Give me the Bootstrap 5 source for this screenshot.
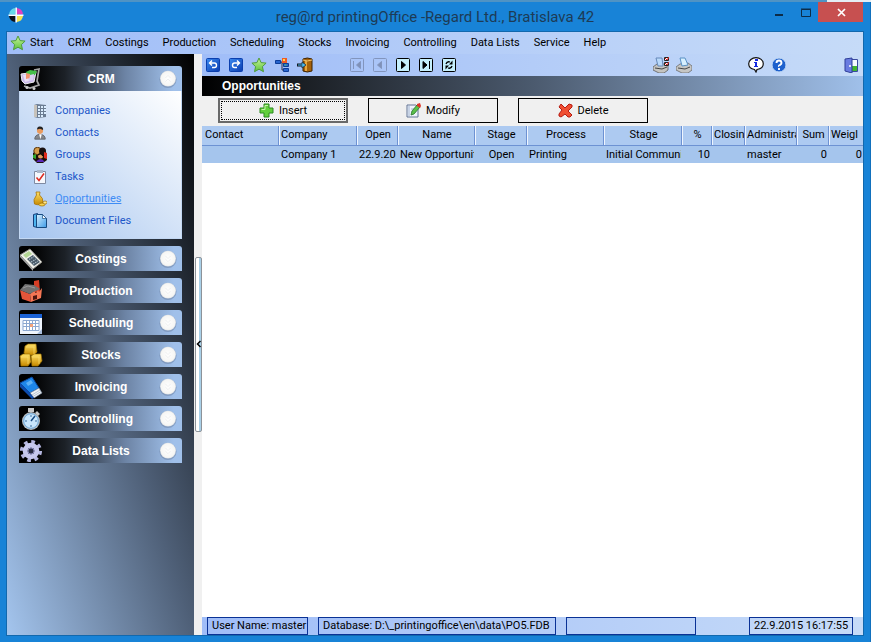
<!DOCTYPE html>
<html lang="en">
<head>
<meta charset="utf-8">
<meta name="viewport" content="width=device-width, initial-scale=1">
<title>reg@rd printingOffice</title>
<link href="https://cdn.jsdelivr.net/npm/bootstrap@5.3.0/dist/css/bootstrap.min.css" rel="stylesheet">
<style>
body{font-family:Roboto,"Liberation Sans",Arial,sans-serif;font-size:11px;line-height:16px;color:#000;background:#fff}
svg{display:block;flex:none}
button{font:inherit;color:inherit}
.app-window{min-height:100vh;margin-right:1px;background:#1883d7;padding:0 7px 7px;border-right:1px solid #1170bd}
.top-strip{height:2px;margin:0 -8px 0 -7px;background:linear-gradient(90deg,#4f93c4 95%,#e4eef5 95%)}
.title-bar{height:30px}
.title-text{font-family:Roboto,"Open Sans",sans-serif;font-size:15px;line-height:30px;color:#1d3b56;padding-right:18px}
.win-btn{width:27px;height:20px;border:0;background:none;padding:0}
.win-close{width:45px;background:#c75050}
.client{outline:1px solid #1268ad}
.blue-bar{background:linear-gradient(90deg,#a0bdf8,#c6dbf8)}
.menu-bar{height:22px;padding-left:3px}
.menu-bar a{color:#000;text-decoration:none;padding:0 7px;line-height:22px}
.menu-bar a.start-link{padding-left:0}
.side-bar{flex:0 0 187px;padding:12px 12px 20px;background:linear-gradient(to bottom left,#000,#4f6078 50%,#a4c5ee)}
.group-head{height:25px;width:100%;border:0;padding:0 5px 0 0;background:linear-gradient(90deg,#000 8%,#1c2127 28%,#6c83a4 65%,#a0c0ea 95%);border-radius:3px 3px 0 0;color:#fff;font-family:"Liberation Sans",Arial,sans-serif;font-weight:700;font-size:12px}
.group-list{padding:9px 13px 6px;background:linear-gradient(to top right,#a4c4ef,#fff);border:1px solid #c3d8f3;border-top:0}
.group-list a{height:22px;color:#1c56c8;text-decoration:none}
.group-list a.current{color:#3f8cf5;text-decoration:underline}
.group-stack{gap:7px;padding-top:7px}
.splitter{flex:0 0 8px;background:#f0f0f0}
.grip{width:7px;height:30%;border:1px solid #8c9299;border-radius:2px;background:linear-gradient(90deg,#fff 55%,#a9d0e8 55%)}
.tool-bar{height:22px;padding:0 4px 0 3px}
.tool-bar button{border:0;padding:0;background:none;width:16px;height:16px}
.tool-group{gap:7px}
.spread{gap:56px}
.nav-gap{margin-left:36px}
.page-head{height:20px;padding-left:20px;line-height:20px;font-family:"Liberation Sans",Arial,sans-serif;font-size:12px;font-weight:700;color:#fff;background:linear-gradient(90deg,#000,#16191d 12%,#4b5a6e 50%,#a0c0ea)}
.actions{background:#f0f0f0;gap:20px;padding:2px 16px 3px}
.act{width:130px;height:25px;border:1px solid #000;background:#f0f0f0;gap:5px;padding:0}
.act.focused{border:2px solid #696969;outline:1px dotted #000;outline-offset:-4px}
.data-grid{table-layout:fixed;width:100%}
.data-grid th,.data-grid td{overflow:hidden;white-space:nowrap;padding:0 0 0 3px;font-weight:400}
.data-grid th{background:#adcaf1;border-bottom:1px solid #6d92d3;text-align:center;height:19px;line-height:18px}
.data-grid th+th{background:linear-gradient(90deg,#6d92d3 1px,#eef5ff 1px,#eef5ff 2px,#adcaf1 2px)}
.data-grid td{background:#a5c5ed;height:17px;line-height:17px}
.data-grid th.lead-col{text-align:left}
.data-grid td.text-end{padding-right:1px}
.work{background:#fff}
.status-bar{height:18px;padding:0 10px 0 5px;gap:10px}
.status-box{border:1px solid #0a3296;height:18px;line-height:16px;padding:0 4px;white-space:nowrap}
.w-user{width:101px}.w-db{width:238px}.w-empty{width:130px}.w-time{width:104px}
</style>
<script src="https://cdn.jsdelivr.net/npm/bootstrap@5.3.0/dist/js/bootstrap.bundle.min.js"></script>
</head>
<body>
<svg width="0" height="0" class="position-absolute" aria-hidden="true">
<defs>
<linearGradient id="gBlue" x2="1" y2="1"><stop stop-color="#3b8af0"/><stop offset="1" stop-color="#0a3cb0"/></linearGradient>
<linearGradient id="gGold" x2="0" y2="1"><stop stop-color="#ffe066"/><stop offset="1" stop-color="#c78a00"/></linearGradient>
<linearGradient id="gGreen" x2="0" y2="1"><stop stop-color="#c9f59c"/><stop offset="1" stop-color="#5cc23c"/></linearGradient>
<linearGradient id="gDoc" x2="1" y2="1"><stop stop-color="#d8f0ff"/><stop offset="1" stop-color="#3d9be8"/></linearGradient>
<radialGradient id="gKnob"><stop stop-color="#fff"/><stop offset=".85" stop-color="#f6f6f4"/><stop offset="1" stop-color="#dde0e4"/></radialGradient>
<symbol id="star" viewBox="0 0 16 16"><path d="M8 1l2.1 4.6 5 .5-3.7 3.500 1.100 5.100L8 12.200l-4.500 2.500 1.100-5.100L.9 6.100l5-.5z" fill="url(#gGreen)" stroke="#4f9b3d"/></symbol>
<symbol id="knob" viewBox="0 0 20 20"><circle cx="10" cy="10.500" r="9.500" fill="#64789a" opacity=".45"/><circle cx="10" cy="9.500" r="8.800" fill="url(#gKnob)"/><path d="M7 6.500l3 3 3-3M7 10l3 3 3-3" fill="none" stroke="#ecedee"/></symbol>
<symbol id="knobUp" viewBox="0 0 20 20"><circle cx="10" cy="10.500" r="9.500" fill="#64789a" opacity=".45"/><circle cx="10" cy="9.500" r="8.800" fill="url(#gKnob)"/><path d="M7 9l3-3 3 3M7 13l3-3 3 3" fill="none" stroke="#ecedee"/></symbol>
</defs>
</svg>
<div class="app-window d-flex flex-column">
<div class="top-strip"></div>
<header class="title-bar position-relative d-flex align-items-start">
<svg class="mt-1" width="18" height="18" viewBox="-2 1 18 18" aria-hidden="true"><path d="M6.500 3v6.500H0A7 7 0 016.500 3z" fill="#66d8e8"/><path d="M8 3v6.500h6A7 7 0 008 3z" fill="#e040c0"/><path d="M6.500 11v6A7 7 0 010 11z" fill="#101018"/><path d="M8 11v6a7 7 0 006-6z" fill="#f4e050"/><path d="M7.200 2.500v15M-.5 10.200h15" stroke="#fff" stroke-width="1.500"/></svg>
<div class="title-text flex-grow-1 text-center">reg@rd printingOffice -Regard Ltd., Bratislava 42</div>
<div class="d-flex position-absolute end-0">
<button class="win-btn" aria-label="Minimize"><svg width="27" height="20"><path d="M11 13h8" stroke="#0c2c48" stroke-width="2"/></svg></button>
<button class="win-btn" aria-label="Maximize"><svg width="27" height="20"><path d="M10.500 7.500h9v7h-9zM10 7h10" fill="none" stroke="#0c2c48"/></svg></button>
<button class="win-btn win-close" aria-label="Close"><svg width="45" height="20"><path d="M20 7l7 7M27 7l-7 7" stroke="#fff" stroke-width="1.700"/></svg></button>
</div>
</header>
<div class="client flex-grow-1 d-flex flex-column">
<nav class="menu-bar blue-bar d-flex align-items-center" aria-label="Main menu">
<a href="#" class="start-link d-flex align-items-center gap-1"><svg width="16" height="16"><use href="#star"/></svg>Start</a>
<a href="#">CRM</a><a href="#">Costings</a><a href="#">Production</a><a href="#">Scheduling</a><a href="#">Stocks</a><a href="#">Invoicing</a><a href="#">Controlling</a><a href="#">Data Lists</a><a href="#">Service</a><a href="#">Help</a>
</nav>
<div class="flex-grow-1 d-flex">
<aside class="side-bar d-flex flex-column">
<section>
<button class="group-head d-flex align-items-center"><svg width="24" height="24" viewBox="0 0 24 24"><path d="M15 3l5-1-2 12 2 4-9 3-6-2" fill="none" stroke="#a5a5a5" stroke-width="1.700"/><path d="M2 7l15-2-2 10-9 2-3-3z" fill="#c9b8e8" stroke="#eee"/><path d="M7 5l4-2 7 1-2 4-7 1z" fill="#45c04a"/><path d="M4 8l5-1 1 7-4 1z" fill="#eadff5"/><path d="M7 6l4 1v4l-4 1z" fill="#f2946c"/><path d="M11 8l4-1-1 6-4 1z" fill="#dcd0f2"/><circle cx="8" cy="20.500" r="1.500" fill="#ccc"/><circle cx="15" cy="21.500" r="1.500" fill="#ccc"/></svg><span class="flex-grow-1">CRM</span><svg width="18" height="20"><use href="#knobUp"/></svg></button>
<nav class="group-list d-flex flex-column" aria-label="CRM">
<a href="#" class="d-flex align-items-center gap-2"><svg width="14" height="16" viewBox="0 0 14 16"><path d="M1 2l3-1 9 1v12l-8 1-4-1z" fill="#6b7c92"/><path d="M1 2h3v12H1z" fill="#c6c2bb"/><path d="M5 4h8M5 7h8M5 10h8M5 13h5" stroke="#dceeff" stroke-width="2" stroke-dasharray="2 1"/></svg>Companies</a>
<a href="#" class="d-flex align-items-center gap-2"><svg width="14" height="16" viewBox="0 0 16 16"><path d="M2 15q0-5 6-5.500 6 .5 6 5.500z" fill="#85878c" stroke="#606268"/><path d="M7 9.500h3L8.500 15z" fill="#fff"/><circle cx="8" cy="5.500" r="3.500" fill="#e99a5e"/><path d="M4.500 4Q5 0 8 .5q4 0 3.500 4L8 3z" fill="#222"/></svg>Contacts</a>
<a href="#" class="d-flex align-items-center gap-2"><svg width="14" height="16" viewBox="0 0 14 16"><path d="M0 6l3-2 10 1 1 8-4 3H4l-4-4z" fill="#1c0f08"/><circle cx="4.500" cy="4" r="3.700" fill="#d59c48" stroke="#57340c"/><path d="M0 8l3-1v5l-3-1z" fill="#36a62e"/><circle cx="9.500" cy="4" r="3.500" fill="#181010"/><path d="M11 5l3 1v6l-3-1z" fill="#e02a1c"/><circle cx="7.500" cy="9" r="2.500" fill="#e0a060"/><path d="M5 8q3-3 5 1" fill="none" stroke="#100804" stroke-width="1.500"/><path d="M3 15q2-3 4.500-3t4 3z" fill="#5a28b8"/></svg>Groups</a>
<a href="#" class="d-flex align-items-center gap-2"><svg width="14" height="16" viewBox="0 0 14 16"><path d="M1.500 2.500h11v12h-11z" fill="#f5f8fe" stroke="#7f8aa2"/><path d="M4 1h6v3H4z" fill="#a9b6cb"/><path d="M3.500 8.500l2.500 3 5-7" fill="none" stroke="#dc2a20" stroke-width="1.500"/></svg>Tasks</a>
<a href="#" class="current d-flex align-items-center gap-2"><svg width="14" height="16" viewBox="0 0 14 16"><path d="M3 1h4L6.500 4q4 3 3.500 8-3 3-8.500 1-2-4 2-9z" fill="url(#gGold)" stroke="#a87409" stroke-width=".8"/><ellipse cx="9" cy="13.500" rx="3" ry="1.500" fill="#f8d34c" stroke="#9d6b03" stroke-width=".7"/><ellipse cx="12" cy="11.500" rx="2" ry="1.500" fill="#ffe98a" stroke="#9d6b03" stroke-width=".7"/></svg>Opportunities</a>
<a href="#" class="d-flex align-items-center gap-2"><svg width="14" height="16" viewBox="0 0 14 16"><path d="M.5 1.500l4-1v14l-4-1z" fill="#4db4ee" stroke="#153e7a"/><path d="M3.500 1.500h6l4 4v9h-10z" fill="url(#gDoc)" stroke="#174a80"/><path d="M9.500 1.500v4h4z" fill="#fff" stroke="#174a80" stroke-width=".7"/></svg>Document Files</a>
</nav>
</section>
<div class="group-stack d-flex flex-column">
<button class="group-head d-flex align-items-center"><svg width="24" height="24" viewBox="0 0 24 24"><path d="M1 8l10-6 12 13-9 7z" fill="#f0f0ea" stroke="#8a8a84"/><path d="M1 8v2l13 14v-2z" fill="#aaa"/><path d="M4 8l6-4 3 3-6 4z" fill="#b4d694"/><path d="M8 12l6-4 7 7-6 4z" fill="#4a5a68"/><path d="M10 12.500l5-3M12 15l5-3M14 17l5-3" stroke="#a9bac6" stroke-width="1.200" stroke-dasharray="1.500 1"/></svg><span class="flex-grow-1">Costings</span><svg width="18" height="20"><use href="#knob"/></svg></button>
<button class="group-head d-flex align-items-center"><svg width="24" height="24" viewBox="0 0 24 24"><path d="M15 2l5-1 1 12h-6z" fill="#d63d24"/><path d="M1 11l10 4 1 8-9-3z" fill="#e4553a"/><path d="M11 15l4-3 2 2 2-3 1 2 3-4-1 10-10 4z" fill="#f47654"/><path d="M1 11l5-6 9 1 6 4-4 2-3 1-3 2z" fill="#707070"/><path d="M4 9l5-2 7 2" fill="none" stroke="#999"/><path d="M14 17l4-1v4l-4 1z" fill="#4e1710"/></svg><span class="flex-grow-1">Production</span><svg width="18" height="20"><use href="#knob"/></svg></button>
<button class="group-head d-flex align-items-center"><svg width="24" height="24" viewBox="0 0 24 24"><path d="M1 3h22v20H1z" fill="#eef4fc"/><path d="M1 3h22v4H1z" fill="#1b62d5"/><path d="M4 9.500h16v10H4z" fill="#fff" stroke="#8ba7d0"/><path d="M4 12.500h16M4 15.500h16M7.500 10v9M10.500 10v9M13.500 10v9M16.500 10v9" stroke="#8ba7d0"/><path d="M11 13h3v3h-3z" fill="#f2a27a"/><path d="M18 23l5-5v5z" fill="#a9bedd"/></svg><span class="flex-grow-1">Scheduling</span><svg width="18" height="20"><use href="#knob"/></svg></button>
<button class="group-head d-flex align-items-center"><svg width="24" height="24" viewBox="0 0 24 24" stroke="#9c7000" stroke-width=".7"><path d="M6 3l3-2h8l1 8-3 3H7L5 10z" fill="url(#gGold)"/><path d="M1 13l3-2h7l1 8-3 4H2z" fill="url(#gGold)"/><path d="M12 13l3-2h7l1 7-4 5h-6z" fill="url(#gGold)"/><path d="M7 4h8v7M2 14h7v7M13 14h7v7" fill="none" stroke="#fae073"/></svg><span class="flex-grow-1">Stocks</span><svg width="18" height="20"><use href="#knob"/></svg></button>
<button class="group-head d-flex align-items-center"><svg width="24" height="24" viewBox="0 0 24 24"><path d="M1 8L13 2l7 11-9 5z" fill="#1e86ea" stroke="#0b469c"/><path d="M7 8l5-3 2 3-5 3z" fill="#5cb0f6"/><path d="M11 18l9-5 3 5-8 5z" fill="#eef1f5" stroke="#7c8da3" stroke-width=".6"/><path d="M13 20l8-5M14 21.500l8-5" stroke="#a3b0c0" stroke-width=".7"/><path d="M1 8l10 10 4 5-2 1L1 12z" fill="#0d4bac"/></svg><span class="flex-grow-1">Invoicing</span><svg width="18" height="20"><use href="#knob"/></svg></button>
<button class="group-head d-flex align-items-center"><svg width="24" height="24" viewBox="0 0 24 24"><path d="M9 1h6v4H9zM18 4l3 3-2 2-3-3z" fill="#c8c8c8"/><circle cx="12" cy="14" r="9" fill="#b7bcc1"/><circle cx="12" cy="14" r="7.300" fill="#c9e6fc" stroke="#6caadd"/><path d="M12 14l4-5M12 8.500v1M12 18.500v1M6.500 14h1M16.500 14h1" stroke="#174a80" stroke-width="1.500"/></svg><span class="flex-grow-1">Controlling</span><svg width="18" height="20"><use href="#knob"/></svg></button>
<button class="group-head d-flex align-items-center"><svg width="24" height="24" viewBox="0 0 24 24"><circle cx="12" cy="12" r="9.300" fill="none" stroke="#b5b7e0" stroke-width="3.500" stroke-dasharray="3.650"/><circle cx="12" cy="12" r="5.800" fill="none" stroke="#c6c8ed" stroke-width="5"/><circle cx="12" cy="12" r="3" fill="#292d42" stroke="#8587b8"/></svg><span class="flex-grow-1">Data Lists</span><svg width="18" height="20"><use href="#knob"/></svg></button>
</div>
</aside>
<div class="splitter d-flex align-items-center justify-content-center"><div class="grip d-flex align-items-center"><svg width="5" height="8" viewBox="0 0 5 8"><path d="M4.500 1l-3 3 3 3" fill="none" stroke="#000" stroke-width="1.500"/></svg></div></div>
<main class="flex-grow-1 d-flex flex-column work">
<div class="tool-bar blue-bar d-flex align-items-center justify-content-between">
<div class="d-flex">
<div class="tool-group d-flex">
<button aria-label="Undo"><svg width="16" height="16"><rect x="1.500" y="1.500" width="13" height="13" rx="1" fill="url(#gBlue)" stroke="#0b3fae"/><path d="M5 6h4.500q2 0 2 2.200T9.500 10.500H7M7 3.500L4.500 6 7 8.500" fill="none" stroke="#fff" stroke-width="1.400"/></svg></button>
<button aria-label="Redo"><svg width="16" height="16"><rect x="1.500" y="1.500" width="13" height="13" rx="1" fill="url(#gBlue)" stroke="#0b3fae"/><path d="M11 6H6.500q-2 0-2 2.200t2 2.300H9M9 3.500L11.500 6 9 8.500" fill="none" stroke="#fff" stroke-width="1.400"/></svg></button>
<button aria-label="Favourites"><svg width="16" height="16"><use href="#star"/></svg></button>
<button aria-label="Structure"><svg width="16" height="16"><path d="M4 5h4v8h3M8 6h3" fill="none" stroke="#334"/><path d="M1.500 3.500h5v3h-5zM9.500 6.500h5v3h-5zM9.500 11.500h5v3h-5z" fill="#2764cf" stroke="#0d3d99"/><path d="M8 1h5v5H8z" fill="#ef5a24"/><path d="M9 2h2v2H9z" fill="#ffd94d"/><path d="M10.500 7.500h2v1h-2z" fill="#65d75e"/></svg></button>
<button aria-label="Database"><svg width="16" height="16"><path d="M6 2q4-2 9 0v12q-5 2-9 0z" fill="#a6620b" stroke="#3d2200"/><path d="M9 4v10" stroke="#e6a53d" stroke-width="2"/><path d="M6 3q4 2 9 0" fill="none" stroke="#f1c36e"/><path d="M0 8h7" stroke="#101820" stroke-width="3"/><path d="M5 5l4 3-4 3z" fill="#4dbbf2" stroke="#123" stroke-width=".7"/><path d="M1 8h6" stroke="#4dbbf2"/></svg></button>
</div>
<div class="tool-group nav-gap d-flex">
<button aria-label="First record" disabled><svg width="16" height="16" fill="#7f91b8" stroke="#8295bd"><rect x="1.500" y="1.500" width="13" height="13" rx="1" fill="none"/><path d="M4.500 4v8M11.500 4.500v7L7.500 8z"/></svg></button>
<button aria-label="Previous record" disabled><svg width="16" height="16" fill="#7f91b8" stroke="#8295bd"><rect x="1.500" y="1.500" width="13" height="13" rx="1" fill="none"/><path d="M9.500 4.500v7L5.500 8z"/></svg></button>
<button aria-label="Next record"><svg width="16" height="16" stroke="#000"><rect x="1.500" y="1.500" width="13" height="13" rx="1" fill="#c5effc"/><path d="M6.500 4.500v7l4-3.500z"/></svg></button>
<button aria-label="Last record"><svg width="16" height="16" stroke="#000"><rect x="1.500" y="1.500" width="13" height="13" rx="1" fill="#c5effc"/><path d="M5 4.500v7L9 8zM11.500 4v8"/></svg></button>
<button aria-label="Refresh"><svg width="16" height="16" stroke="#000"><rect x="1.500" y="1.500" width="13" height="13" rx="1" fill="#c5effc"/><path d="M5 7q1-3 4-2M11 9q-1 3-4 2" fill="none" stroke-width="1.300"/><path d="M11.500 3.500v4H8zM4.500 12.500v-4H8z" stroke="none"/></svg></button>
</div>
</div>
<div class="d-flex spread">
<div class="tool-group d-flex">
<button aria-label="Print setup"><svg width="16" height="16"><path d="M0 10l4-3h8l3 2v4l-4 3H6l-6-3z" fill="#c4c4c1" stroke="#5d5d5d" stroke-width=".8"/><path d="M3 1h6l1 8H5z" fill="#b9d9fa" stroke="#6689ba"/><path d="M2 11l7 1 5-2" fill="none" stroke="#444"/><path d="M11.500.5h4v3h-4zM11.500 5.500h4v3h-4z" fill="#fff" stroke="#222"/><path d="M12 1l2 2 2-3M12 6l2 2 2-3" fill="none" stroke="#e02020"/></svg></button>
<button aria-label="Print"><svg width="16" height="16"><path d="M0 10l4-3 8-1 4 3v4l-4 3H6l-6-3z" fill="#c6c6c4" stroke="#6a6a6a" stroke-width=".8"/><path d="M4 1l5 0 3 7-6 1z" fill="#d7f0ff" stroke="#5a91c5"/><path d="M2 11l7 1 5-2" fill="none" stroke="#484848"/></svg></button>
</div>
<div class="tool-group d-flex">
<button aria-label="Information"><svg width="16" height="16"><path d="M8 .7c4 0 7.300 2.500 7.300 6S12 12 9 12.500L8 15l-1.500-2.500C3.500 12 .7 10 .7 6.700S4 .7 8 .7z" fill="#fff" stroke="#111" stroke-width="1.200"/><path d="M7 2h3v2H7zM6 5h3v4h1v1H6V9h1V6H6z" fill="#1429e0"/></svg></button>
<button aria-label="Help"><svg width="16" height="16"><circle cx="8" cy="8" r="7" fill="#1e61cd" stroke="#c3daf6"/><path d="M5.500 6q0-2.500 2.500-2.500T10.500 6q0 1-1.500 2t-1 1.500M8 11v2" fill="none" stroke="#fff" stroke-width="1.900"/></svg></button>
</div>
<button aria-label="Exit"><svg width="16" height="16"><path d="M8 2.500h6.500v12H8z" fill="#f5fbff" stroke="#3b4a9e"/><path d="M9 9h5v5H9z" fill="#41b62f"/><path d="M2 2l7-1v15l-7-2z" fill="#6a7ce0" stroke="#2f3e99"/><circle cx="7" cy="9" r="1" fill="#fff"/></svg></button>
</div>
</div>
<h1 class="page-head m-0">Opportunities</h1>
<div class="actions d-flex">
<button class="act focused d-flex align-items-center justify-content-center"><svg width="15" height="15" viewBox="0 0 15 15"><path d="M5 1h5v4h4v5h-4v4H5v-4H1V5h4z" fill="#62cf3c" stroke="#2c8a22"/><path d="M6 2.500h3M2.500 6.500H6v-4" fill="none" stroke="#c5f3a6"/></svg>Insert</button>
<button class="act d-flex align-items-center justify-content-center"><svg width="15" height="15" viewBox="0 0 15 15"><path d="M1 2h9l2 2v10H1z" fill="#eef3fb" stroke="#627495"/><path d="M3 3v10M5 6h5M5 9h5" stroke="#a1b4d1"/><path d="M5 12l1-4 5-6 3 2-6 7z" fill="#5bc14a" stroke="#28752a" stroke-width=".8"/><path d="M11 1l3-1 1 3-1 2-3-2z" fill="#de3629"/></svg>Modify</button>
<button class="act d-flex align-items-center justify-content-center"><svg width="15" height="15" viewBox="0 0 15 15"><path d="M3 1l4 4 4-4 3 1v2l-4 4 4 4-2 2h-2L7 11l-4 3-2-1v-2l3-4-3-3z" fill="#f04f32" stroke="#b61b12"/></svg>Delete</button>
</div>
<table class="data-grid">
<colgroup><col style="width:76px"><col style="width:78px"><col style="width:41px"><col style="width:77px"><col style="width:52px"><col style="width:77px"><col style="width:78px"><col style="width:30px"><col style="width:33px"><col style="width:52px"><col style="width:32px"><col style="width:35px"></colgroup>
<thead><tr><th class="lead-col">Contact</th><th class="lead-col">Company</th><th>Open</th><th>Name</th><th>Stage</th><th>Process</th><th>Stage</th><th>%</th><th class="lead-col">Closin</th><th class="lead-col">Administra</th><th>Sum</th><th class="lead-col">Weigl</th></tr></thead>
<tbody><tr><td></td><td>Company 1</td><td>22.9.20</td><td>New Opportunit</td><td class="text-center">Open</td><td>Printing</td><td>Initial Communic</td><td class="text-end">10</td><td></td><td>master</td><td class="text-end">0</td><td class="text-end">0</td></tr></tbody>
</table>
<footer class="status-bar blue-bar d-flex mt-auto">
<div class="status-box w-user">User Name: master</div><div class="status-box w-db">Database: D:\_printingoffice\en\data\PO5.FDB</div><div class="status-box w-empty"></div><div class="status-box w-time ms-auto">22.9.2015 16:17:55</div>
</footer>
</main>
</div>
</div>
</div>
</body>
</html>
